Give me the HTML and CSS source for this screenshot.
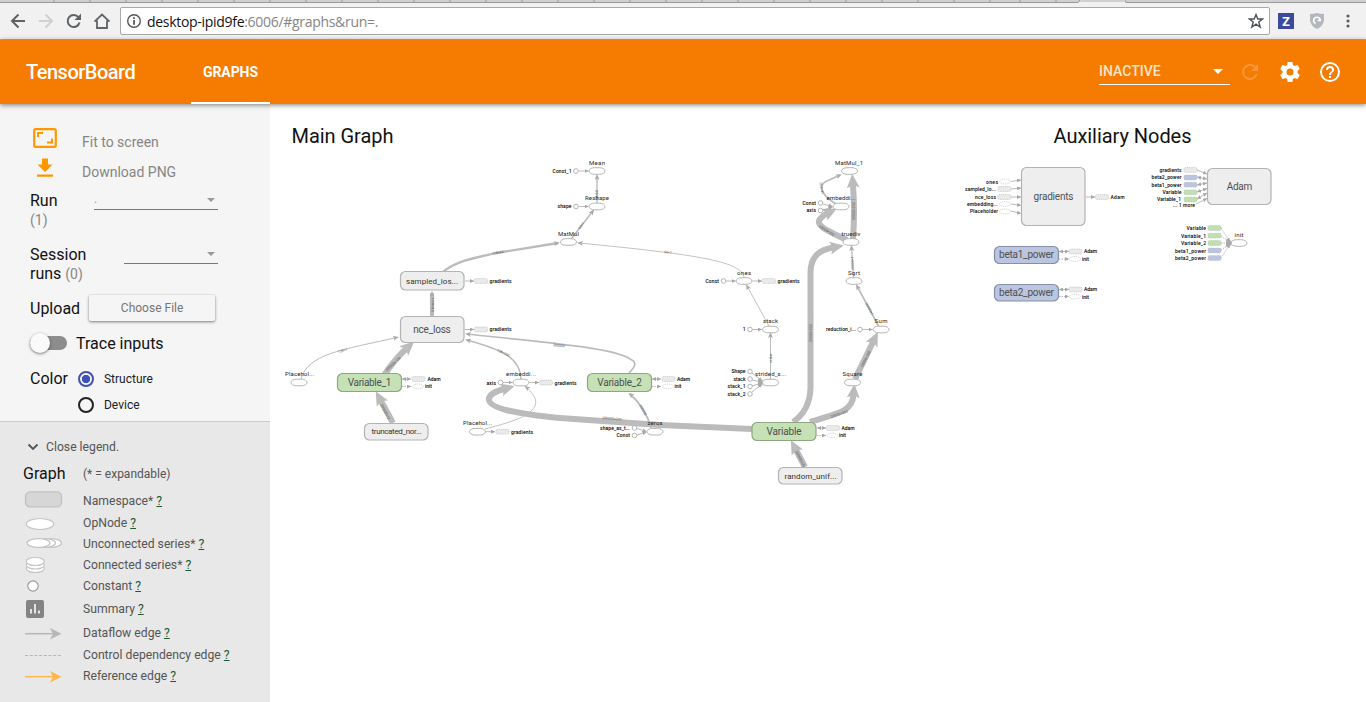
FILE: index.html
```
<!DOCTYPE html>
<html lang="en">
<head>
<meta charset="utf-8">
<title>TensorBoard</title>
<link rel="stylesheet" href="styles.css">
</head>
<body>
<header class="browser">
  <svg class="tabs" viewBox="0 0 1366 9">
    <path class="tab-back" d="M0 0H1080V2H1126V0H1366V2.5H1125L1124 0H1081L1079 2.5H0Z"/>
    <path class="tab-line" d="M0 2.5H1078L1080 0M1125 0L1126 2.5H1366M54 2V0M90 2V0M126 2V0M162 2V0M198 2V0M234 2V0M270 2V0M306 2V0M342 2V0M378 2V0M414 2V0M450 2V0M486 2V0M522 2V0M558 2V0M594 2V0M630 2V0M666 2V0M702 2V0M738 2V0M774 2V0M810 2V0M846 2V0M882 2V0M918 2V0M954 2V0M990 2V0M1020 2V0M1056 2V0"/>
  </svg>
  <div class="navbar">
    <svg class="nav-icons" viewBox="0 0 120 30">
      <g fill="none" stroke="#5f6368" stroke-width="2">
        <path d="M25 12H12.5M18.5 5.5L12 12L18.5 18.500"/>
        <path stroke="#d0d0d0" d="M39 12H51.500M45.500 5.500L52 12L45.500 18.500"/>
        <path d="M78.500 8.500A6 6 0 1 0 79.500 13.500"/>
        <path stroke-width="1.800" d="M94.500 12.700L102 5.500L109.500 12.700M97 11.500V19H107V11.500"/>
      </g>
      <path fill="#5f6368" d="M81 4.500V11H74.500Z"/>
    </svg>
    <div class="address">
      <svg class="info" viewBox="0 0 16 16"><circle cx="8" cy="8" r="6.300" fill="none" stroke="#555" stroke-width="1.400"/><path d="M8 4.300V5.900M8 7V11.700" stroke="#444" stroke-width="1.600"/></svg>
      <span class="url"><b>desktop-ipid9fe</b>:6006/#graphs&amp;run=.</span>
      <svg class="star" viewBox="0 0 16 16"><path d="M8 1.600L9.800 6H14.500L10.800 9L12.200 14L8 11.200L3.800 14L5.200 9L1.500 6H6.200Z" fill="none" stroke="#505459" stroke-width="1.400"/></svg>
    </div>
    <span class="ext-z">Z</span>
    <svg class="shield" viewBox="0 0 14 16"><path d="M0 1Q4 1 7 0Q10 1 14 1V8Q13 13 7 16Q1 13 0 8Z" fill="#b4b8c0"/><path d="M5.500 10.500A3.300 3.300 0 1 1 10.300 7.500L7.500 7.500" fill="none" stroke="#fff" stroke-width="1.600"/></svg>
    <svg class="dots" viewBox="0 0 4 14"><g fill="#5a5e63"><circle cx="2" cy="2" r="1.600"/><circle cx="2" cy="7" r="1.600"/><circle cx="2" cy="12" r="1.600"/></g></svg>
  </div>
</header>

<nav class="toolbar">
  <div class="brand">TensorBoard</div>
  <div class="tab">GRAPHS</div>
  <div class="inactive"><span>INACTIVE</span><i class="caret"></i></div>
  <svg class="tool refresh" viewBox="0 0 24 24"><path d="M17.650 6.350A8 8 0 1 0 19.730 14h-2.080A6 6 0 1 1 12 6c1.660 0 3.140.690 4.220 1.780L13 11h7V4z"/></svg>
  <svg class="tool" viewBox="0 0 24 24"><path d="M19.430 12.980c.040-.320.070-.640.070-.980s-.030-.660-.070-.980l2.110-1.650c.190-.150.240-.420.120-.640l-2-3.460c-.120-.220-.390-.300-.610-.220l-2.490 1c-.520-.400-1.080-.730-1.690-.980l-.380-2.650C14.460 2.180 14.250 2 14 2h-4c-.250 0-.460.180-.490.420l-.380 2.650c-.610.250-1.170.590-1.690.980l-2.490-1c-.230-.090-.490 0-.610.220l-2 3.460c-.130.220-.070.490.120.640l2.110 1.650c-.040.320-.070.650-.070.980s.030.660.070.980l-2.110 1.650c-.190.150-.240.420-.120.640l2 3.460c.120.220.390.300.610.220l2.490-1c.520.400 1.080.730 1.690.980l.380 2.650c.030.240.240.420.490.420h4c.250 0 .460-.180.490-.420l.380-2.650c.610-.250 1.170-.590 1.690-.980l2.490 1c.230.090.490 0 .610-.220l2-3.460c.120-.220.070-.490-.120-.640l-2.110-1.650zM12 15.500A3.500 3.500 0 1 1 12 8.500a3.500 3.500 0 0 1 0 7z"/></svg>
  <svg class="tool" viewBox="0 0 24 24"><path d="M11 18h2v-2h-2v2zm1-16a10 10 0 1 0 0 20 10 10 0 0 0 0-20zm0 18a8 8 0 1 1 0-16 8 8 0 0 1 0 16zm0-14a4 4 0 0 0-4 4h2c0-1.100.900-2 2-2s2 .900 2 2c0 2-3 1.750-3 5h2c0-2.250 3-2.500 3-5a4 4 0 0 0-4-4z"/></svg>
</nav>

<main class="content">
  <aside class="sidebar">
    <section class="controls">
      <div class="action fit"><svg viewBox="0 0 24 20"><rect x="1.200" y="1.200" width="21.600" height="17.600" rx="1.500" fill="none" stroke="#ff9800" stroke-width="2.200"/><path d="M5 9V5H10M14 14.500H19V10.500" fill="none" stroke="#ff9800" stroke-width="2"/></svg><span>Fit to screen</span></div>
      <div class="action dl"><svg viewBox="0 0 24 20"><path fill="#ff9800" d="M9 .5H15V6.500H19.500L12 14L4.500 6.500H9ZM4 16.500H20V18.700H4Z"/></svg><span>Download PNG</span></div>
      <div class="field run"><div class="name">Run<br><small>(1)</small></div><div class="select wide"><span>.</span><i class="caret"></i></div></div>
      <div class="field session"><div class="name">Session<br>runs <small>(0)</small></div><div class="select"><i class="caret"></i></div></div>
      <div class="upload"><span>Upload</span><div class="file">Choose File</div></div>
      <div class="trace"><div class="switch"><i></i></div><span>Trace inputs</span></div>
      <div class="color"><span>Color</span><div class="radios"><div class="radio on"><i></i>Structure</div><div class="radio"><i></i>Device</div></div></div>
    </section>
    <section class="legend">
      <div class="close"><svg viewBox="0 0 12 8"><path d="M1.500 1.500L6 6L10.500 1.500" fill="none" stroke="#555" stroke-width="1.900"/></svg>Close legend.</div>
      <div class="head"><b>Graph</b><span>(* = expandable)</span></div>
      <div class="item ns-item"><svg viewBox="0 0 40 18"><rect x="1.500" y=".8" width="36" height="15" rx="4.500" fill="#d6d6d6" stroke="#c2c2c2" stroke-width="1.300"/></svg><span>Namespace* <u>?</u></span></div>
      <div class="item"><svg viewBox="0 0 40 18"><ellipse class="le" cx="16" cy="10" rx="13.700" ry="5.500"/></svg><span>OpNode <u>?</u></span></div>
      <div class="item"><svg viewBox="0 0 40 18"><ellipse class="le" cx="26.500" cy="8" rx="11" ry="4.400"/><ellipse class="le" cx="20.500" cy="8" rx="11" ry="4.400"/><ellipse class="le" cx="14.500" cy="8" rx="11.500" ry="4.400"/></svg><span>Unconnected series* <u>?</u></span></div>
      <div class="item"><svg viewBox="0 0 40 18"><ellipse class="le" cx="11.300" cy="12.500" rx="9" ry="4"/><ellipse class="le" cx="11.300" cy="9" rx="9" ry="4"/><ellipse class="le" cx="11.300" cy="5.500" rx="9" ry="4"/></svg><span>Connected series* <u>?</u></span></div>
      <div class="item"><svg viewBox="0 0 40 18"><circle cx="9" cy="9" r="5.200" fill="#fff" stroke="#999" stroke-width="1.200"/></svg><span>Constant <u>?</u></span></div>
      <div class="item summary"><svg viewBox="0 0 40 18"><rect x="2" y="0" width="18" height="18" rx="2" fill="#848484"/><path d="M7 13.500V9M11 13.500V4M15 13.500V10.500" stroke="#eee" stroke-width="1.800"/></svg><span>Summary <u>?</u></span></div>
      <div class="item flow"><svg viewBox="0 0 40 18"><path d="M1 9.700H30" stroke="#b7b7b7" stroke-width="1.500"/><path d="M26 4L37.500 9.700L26 15.400L29 9.700Z" fill="#b7b7b7"/></svg><span>Dataflow edge <u>?</u></span></div>
      <div class="item"><svg viewBox="0 0 40 18"><path d="M1 9.500H37" stroke="#b7b7b7" stroke-width="1.200" stroke-dasharray="3 1.700"/></svg><span>Control dependency edge <u>?</u></span></div>
      <div class="item"><svg viewBox="0 0 40 18"><path d="M1 9.700H30" stroke="#ffb74d" stroke-width="1.500"/><path d="M26 4L37.500 9.700L26 15.400L29 9.700Z" fill="#ffb74d"/></svg><span>Reference edge <u>?</u></span></div>
    </section>
  </aside>

  <svg class="graph" viewBox="270 104 1096 598">
    <defs>
      <marker id="big" markerUnits="userSpaceOnUse" markerWidth="14" markerHeight="13" viewBox="0 0 14 13" refX="3" refY="6.500" orient="auto"><path d="M0 0L14 6.500L0 13L3 6.500Z" fill="#bbb"/></marker>
      <marker id="mid" markerUnits="userSpaceOnUse" markerWidth="6" markerHeight="5" viewBox="0 0 6 5" refX="4" refY="2.500" orient="auto"><path d="M0 0L6 2.500L0 5L1.500 2.500Z" fill="#aaa"/></marker>
      <marker id="tiny" markerUnits="userSpaceOnUse" markerWidth="4" markerHeight="4" viewBox="0 0 4 4" refX="4" refY="2" orient="auto-start-reverse"><path d="M0 0L4 2L0 4Z" fill="#a6a6a6"/></marker>
      <rect id="op" x="-8" y="-3.300" width="16" height="6.600" rx="5.500" ry="3.300"/>
      <circle id="c" r="2.300"/>
      <rect id="box" x="0" y="-2.400" width="13" height="4.800" rx="1.300"/>
      <ellipse id="oval" cx="6" cy="0" rx="5.500" ry="2.400"/>
    </defs>

    <text class="title" x="291.500" y="143" textLength="102">Main Graph</text>
    <text class="title" x="1053.500" y="143" textLength="138">Auxiliary Nodes</text>

    <g class="edge thick">
      <path d="M376 391C380 379 394 360 406 349"/>
      <path d="M393 423L381 401"/>
      <path d="M805 467L796 450"/>
      <path d="M752 429L660 425L560 418C515 414 490 408 489 400C488 394 497 391 504 389"/>
      <path d="M793 422C805 414 810 402 810.500 388V272C811 254 822 249.500 833 247.500"/>
      <path d="M810 422C838 413 852 412 853.500 395"/>
      <path d="M855 379L873 342"/>
      <path d="M853 239Q855 212 853 185"/>
      <path d="M847 240C828 231 813 225 821 218Q823 215.500 827 213.500"/>
    </g>
    <g class="edge medium">
      <path d="M443 272C456 261 474 258 496 253L558 243" stroke-width="2.300"/>
      <path d="M432 316V293" stroke-width="4"/>
      <path d="M571 239L593 211" stroke-width="1.500"/>
      <path d="M597 203V176" stroke-width="1.400"/>
      <path d="M629 373C636 366 637 362 630 359C613 347 530 341 467 334" stroke-width="1.700"/>
      <path d="M521 380C521 358 503 350 467 340" stroke-width="1.300"/>
      <path d="M301 379C308 354 341 350 397 337.500" stroke-width="1"/>
      <path d="M485 429C503 424 545 415 534 396Q530 390 526 387" stroke-width=".9"/>
      <path d="M744 278C743 262 703 255 579 243" stroke-width=".9"/>
      <path d="M769 326L747 286" stroke-width=".9"/>
      <path d="M770.500 379V334" stroke-width="1"/>
      <path d="M651 428C647 413 639 402 630 394" stroke-width="1.700"/>
      <path d="M879 327L857 286" stroke-width="1.600"/>
      <path d="M853.500 278L851.500 247" stroke-width="1.300"/>
      <path d="M836 204C817 192 820 184 827 181L840 175" stroke-width="1.800"/>
    </g>

    <g class="tensor">
      <text transform="translate(386 371) rotate(-43)">200000×128</text>
      <text transform="translate(381 404) rotate(63)">200000×12</text>
      <text transform="translate(796 451) rotate(63)">200000×20</text>
      <text transform="translate(602 418) rotate(5)">200000×200</text>
      <text transform="translate(811 342) rotate(-90)">20000×200</text>
      <text transform="translate(831 417) rotate(-18)">20000×200</text>
      <text transform="translate(862 367) rotate(-63)">20000×200</text>
      <text transform="translate(854.500 220) rotate(-90)">20000×200</text>
      <text transform="translate(819 226) rotate(32)">20000×200</text>
      <text transform="translate(492 254) rotate(-10)">128×64</text>
      <text transform="translate(433 312) rotate(-90)">6 tensors</text>
      <text transform="translate(579 229) rotate(-52)">64×1</text>
      <text transform="translate(597.500 200) rotate(-90)">64×64</text>
      <text transform="translate(553 345) rotate(7)">200000</text>
      <text transform="translate(497 350) rotate(27)">128×200</text>
      <text transform="translate(338 352) rotate(-14)">128×1</text>
      <text transform="translate(664 252) rotate(7)">64×1</text>
      <text transform="translate(640 405) rotate(62)">200000</text>
      <text transform="translate(771 363) rotate(-90)">scalar</text>
      <text transform="translate(853 270) rotate(-92)">20000×1</text>
      <text transform="translate(866 303) rotate(62)">20000×1</text>
      <text transform="translate(823 194) rotate(-100)">16×200</text>
    </g>

    <g class="ns">
      <rect x="400.500" y="271.500" width="63.500" height="18.500" rx="5"/>
      <rect x="400.500" y="316.500" width="63.500" height="26" rx="5"/>
      <rect x="364.500" y="423.500" width="63.500" height="16.500" rx="5"/>
      <rect x="778.500" y="467.500" width="63.500" height="16.500" rx="5"/>
      <rect x="1021.500" y="167.500" width="63.500" height="58" rx="5"/>
      <rect x="1207.500" y="168.500" width="63.500" height="36" rx="5"/>
    </g>
    <g class="ns green">
      <rect x="337.500" y="373.500" width="64" height="18" rx="5"/>
      <rect x="587.500" y="373.500" width="64" height="18" rx="5"/>
      <rect x="752" y="422.500" width="64" height="18" rx="5"/>
    </g>
    <g class="ns blue">
      <rect x="994.500" y="246.500" width="64" height="17" rx="5"/>
      <rect x="994.500" y="284.500" width="64" height="16.500" rx="5"/>
    </g>
    <g class="name-sm">
      <text x="432" y="284" textLength="52">sampled_los...</text>
      <text x="396.500" y="434.300" textLength="50">truncated_nor...</text>
      <text x="810.500" y="479" textLength="52">random_unif...</text>
    </g>
    <g class="name-lg">
      <text x="432" y="333" textLength="37.500">nce_loss</text>
      <text x="369.500" y="386.300" textLength="43.500">Variable_1</text>
      <text x="619.500" y="386.300" textLength="44.500">Variable_2</text>
      <text x="784" y="435.300" textLength="35">Variable</text>
      <text x="1053.500" y="200" textLength="40">gradients</text>
      <text x="1239.500" y="190.300" textLength="25.500">Adam</text>
      <text x="1026.500" y="258.300" textLength="55">beta1_power</text>
      <text x="1026.500" y="296.300" textLength="55">beta2_power</text>
    </g>

    <g class="op">
      <use href="#op" x="597" y="171"/><use href="#op" x="597" y="206.500"/><use href="#op" x="568.500" y="242"/>
      <use href="#op" x="744" y="281"/><use href="#op" x="770.500" y="329.500"/><use href="#op" x="770.500" y="382.500"/>
      <use href="#op" x="521" y="382.500"/><use href="#op" x="477.500" y="431.700"/><use href="#op" x="299" y="382.500"/>
      <use href="#op" x="655" y="431.700"/><use href="#op" x="849.500" y="171"/><use href="#op" x="841" y="206.500"/>
      <use href="#op" x="851" y="242"/><use href="#op" x="854" y="281"/><use href="#op" x="881" y="329.500"/>
      <use href="#op" x="852.500" y="382.500"/><use href="#op" x="1239" y="243"/>
      <use href="#c" x="576" y="171"/><use href="#c" x="576" y="206.500"/><use href="#c" x="723.500" y="281"/>
      <use href="#c" x="750" y="329.500"/><use href="#c" x="750" y="371.500"/><use href="#c" x="750" y="379"/>
      <use href="#c" x="750" y="386.500"/><use href="#c" x="750" y="394"/><use href="#c" x="500.500" y="382.500"/>
      <use href="#c" x="634.500" y="428"/><use href="#c" x="634.500" y="435.500"/><use href="#c" x="820.500" y="203"/>
      <use href="#c" x="820.500" y="210.500"/><use href="#c" x="860" y="329.500"/>
    </g>
    <g class="op-label">
      <text x="597" y="165" textLength="16">Mean</text><text x="597" y="200" textLength="24">Reshape</text>
      <text x="568.500" y="236" textLength="21">MatMul</text><text x="744" y="275" textLength="14">ones</text>
      <text x="770.500" y="323" textLength="15">stack</text><text x="770.500" y="376" textLength="31">strided_s...</text>
      <text x="521" y="376" textLength="30">embeddi...</text><text x="477.500" y="425" textLength="29">Placehol...</text>
      <text x="299.500" y="376" textLength="29">Placehol...</text><text x="655" y="425" textLength="15">zeros</text>
      <text x="849" y="165" textLength="28">MatMul_1</text><text x="841" y="200" textLength="29">embeddi...</text>
      <text x="851" y="236" textLength="19">truediv</text><text x="854" y="275" textLength="12">Sqrt</text>
      <text x="881" y="323" textLength="13">Sum</text><text x="852.500" y="376" textLength="20">Square</text>
      <text x="1239" y="237" textLength="9">init</text>
    </g>

    <g class="link">
      <path d="M579 171H588.500"/><path d="M579 206.500H588.500"/><path d="M726 281H735.500"/><path d="M752.500 329.500H762"/>
      <path d="M752 373L762 381"/><path d="M752 380L762 382"/><path d="M752 386L762 383"/><path d="M752 392L762 384"/>
      <path d="M503 382.500H512.500"/><path d="M637 428.500L646.500 431.500"/><path d="M637 435L646.500 432"/>
      <path d="M823 204L832.500 206.500"/><path d="M823 210L832.500 207"/><path d="M862.500 329.500H872.500"/>
      <path d="M465 281H474"/><path d="M465 329.500H474"/><path d="M529 382.500H539"/><path d="M485.500 431.700H495"/><path d="M752.500 281H762"/>
      <path d="M1086 197H1095"/>
      <path d="M1011 181.500L1021 180"/><path d="M1011 189L1021 188"/><path d="M1011 197H1021"/><path d="M1011 204L1021 205.500"/><path d="M1011 211L1021 213.500"/>
      <path d="M1197 170L1207 174"/><path class="two" d="M1197 177L1207 179"/><path class="two" d="M1197 185L1207 183"/><path class="two" d="M1197 192L1207 188.500"/><path class="two" d="M1197 199L1207 193"/><path d="M1196 204L1207 198.500"/>
      <path class="two" d="M402 379H411"/><path class="two" d="M652 379H661"/><path class="two" d="M817 428H826"/><path class="two" d="M1059 251.500H1069"/><path class="two" d="M1059 289.500H1069"/>
    </g>
    <g class="link dashed">
      <path d="M402 386.500H411"/><path d="M652 386.500H661"/><path d="M817 435.500H826"/><path d="M1059 259H1069"/><path d="M1059 296.500H1069"/>
      <path d="M1221 228L1230 242"/><path d="M1221 236L1230 242"/><path d="M1221 243H1230"/><path d="M1221 250L1230 244"/><path d="M1221 258L1230 244"/>
    </g>
    <ellipse cx="1229.500" cy="243" rx="2" ry="3" fill="#aaa"/><rect x="759.500" y="379.500" width="3" height="6" fill="#aaa"/>

    <g class="ann">
      <use href="#box" x="474.500" y="281"/><use href="#box" x="474.500" y="329.500"/><use href="#box" x="539.500" y="382.500"/>
      <use href="#box" x="496" y="431.700"/><use href="#box" x="762.500" y="281"/><use href="#box" x="412" y="379"/>
      <use href="#box" x="662" y="379"/><use href="#box" x="826.500" y="428"/><use href="#box" x="1095.500" y="197"/>
      <use href="#box" x="1069" y="251.500"/><use href="#box" x="1069" y="289.500"/><use href="#box" x="998" y="189"/>
      <use href="#box" x="998" y="197"/><use href="#box" x="1184" y="170"/>
      <g class="ann-op"><use href="#oval" x="412" y="386.500"/><use href="#oval" x="662" y="386.500"/><use href="#oval" x="826.500" y="435.500"/>
      <use href="#oval" x="1069" y="259"/><use href="#oval" x="1069" y="296.500"/><use href="#oval" x="999" y="181.500"/>
      <use href="#oval" x="999" y="204"/><use href="#oval" x="999" y="211.500"/></g>
      <g class="ann-blue"><use href="#box" x="1184" y="177.500"/><use href="#box" x="1184" y="184.700"/><use href="#box" x="1208" y="250.500"/><use href="#box" x="1208" y="258"/></g>
      <g class="ann-green"><use href="#box" x="1184" y="192.300"/><use href="#box" x="1184" y="199.500"/><use href="#box" x="1208" y="228"/><use href="#box" x="1208" y="235.700"/><use href="#box" x="1208" y="243"/></g>
    </g>
    <g class="ann-text">
      <text x="489.500" y="283" textLength="22">gradients</text><text x="489.500" y="331.300" textLength="22">gradients</text>
      <text x="554.500" y="384.700" textLength="22">gradients</text><text x="511" y="433.700" textLength="22">gradients</text>
      <text x="777.500" y="283" textLength="22">gradients</text>
      <text x="427.500" y="381" textLength="13">Adam</text><text x="425" y="388.200" textLength="7">init</text>
      <text x="677" y="381" textLength="13">Adam</text><text x="674.500" y="388.200" textLength="7">init</text>
      <text x="841.500" y="430" textLength="13">Adam</text><text x="839" y="437.200" textLength="7">init</text>
      <text x="1110.500" y="199" textLength="14">Adam</text>
      <text x="1084" y="253.300" textLength="13">Adam</text><text x="1082" y="261" textLength="7">init</text>
      <text x="1084" y="291" textLength="13">Adam</text><text x="1082" y="298.500" textLength="7">init</text>
    </g>
    <g class="ann-text end">
      <text x="571.500" y="173" textLength="19">Const_1</text><text x="571.500" y="208.300" textLength="14">shape</text>
      <text x="719" y="283" textLength="13.500">Const</text><text x="745.500" y="331.300">1</text>
      <text x="745.500" y="373" textLength="14">Shape</text><text x="745.500" y="381" textLength="12">stack</text>
      <text x="745.500" y="388.300" textLength="18">stack_1</text><text x="745.500" y="396" textLength="18">stack_2</text>
      <text x="496" y="385" textLength="9.500">axis</text><text x="630" y="430" textLength="30">shape_as_t...</text>
      <text x="630" y="437.200" textLength="13.500">Const</text><text x="816" y="205" textLength="13.500">Const</text>
      <text x="816" y="212" textLength="9.500">axis</text><text x="856" y="331.300" textLength="30">reduction_i...</text>
      <text x="998" y="183.700" textLength="12">ones</text><text x="996" y="191" textLength="31">sampled_lo...</text>
      <text x="996" y="198.700" textLength="21">nce_loss</text><text x="998" y="206" textLength="31">embedding...</text>
      <text x="998" y="213" textLength="28">Placeholder</text>
      <text x="1181.500" y="172" textLength="22">gradients</text><text x="1181.500" y="179.300" textLength="30">beta2_power</text>
      <text x="1181.500" y="186.700" textLength="30">beta1_power</text><text x="1181.500" y="194" textLength="19">Variable</text>
      <text x="1181" y="201.300" textLength="24">Variable_1</text><text x="1195" y="207" textLength="22">... 1 more</text>
      <text x="1206" y="230" textLength="19.500">Variable</text><text x="1206" y="237.700" textLength="25">Variable_1</text>
      <text x="1206" y="245" textLength="25">Variable_2</text><text x="1206" y="252.500" textLength="31">beta1_power</text>
      <text x="1206" y="260" textLength="31">beta2_power</text>
    </g>
  </svg>
</main>
</body>
</html>
```
FILE: styles.css
```
* { box-sizing: border-box; }
body { margin: 0; width: 1366px; height: 702px; overflow: hidden; background: #fff; font-family: Roboto, sans-serif; color: #111; }
svg { display: block; flex: none; }
i { font-style: normal; }

.browser { height: 40px; background: #f1f1f1; border-bottom: 1px solid #b4b0aa; }
.tabs { width: 1366px; height: 9px; }
.tab-back { fill: #d0d0d0; }
.tab-line { fill: none; stroke: #999; stroke-width: 1; }
.navbar { display: flex; height: 30px; }
.nav-icons { width: 120px; height: 30px; }
.address { display: flex; width: 1150px; height: 28px; margin-top: -2px; padding: 0 5px; align-items: center; background: #fff; border: 1px solid #a9a9a9; border-radius: 2px; }
.info { width: 16px; height: 16px; }
.url { flex: 1; margin-left: 5px; font: 14px "Open Sans", sans-serif; letter-spacing: -.3px; color: #858585; white-space: nowrap; }
.url b { font-weight: 400; color: #111; }
.star { width: 16px; height: 16px; }
.ext-z { width: 16px; height: 16px; margin: 4px 0 0 8px; background: #3c4a9d; color: #fff; font: bold 13px/16px "Open Sans", sans-serif; text-align: center; }
.shield { width: 14px; height: 16px; margin: 4px 0 0 16px; }
.dots { width: 4px; height: 14px; margin: 5px 0 0 22px; }

.toolbar { position: relative; z-index: 1; display: flex; align-items: center; height: 64px; padding-left: 26px; background: #f57c00; color: #fff; box-shadow: 0 1px 5px rgba(0,0,0,.5); }
.brand { width: 165px; font-size: 20px; font-weight: 500; letter-spacing: -.5px; }
.tab { width: 79px; height: 64px; border-bottom: 2px solid #fff; font-size: 14px; font-weight: 700; letter-spacing: -.1px; line-height: 65px; text-align: center; }
.inactive { display: flex; justify-content: space-between; align-items: center; width: 131px; height: 28px; margin-left: 829px; margin-top: -2px; padding-right: 7px; border-bottom: 1px solid #fff; font-size: 14px; font-weight: 500; color: #ffe3c7; }
.caret { border: 5px solid transparent; border-top-color: currentColor; border-bottom: 0; }
.inactive .caret { color: #fff; margin-top: 2px; }
.tool { width: 24px; height: 24px; margin-left: 16px; fill: #fff; }
.refresh { width: 24px; margin-left: 8px; fill: #f9963a; }

.content { display: flex; height: 598px; }
.sidebar { width: 270px; background: #f5f5f5; }
.controls { height: 317px; padding: 24px 0 0 30px; font-size: 16px; }
.action { display: flex; height: 30px; font-size: 14px; color: #858585; }
.action svg { width: 24px; height: 20px; margin: 0 25px 0 3px; }
.action span { padding-top: 6px; }
.field { display: flex; height: 54px; }
.field small { font-size: 14px; color: #888; }
.name { width: 64px; line-height: 19px; padding-top: 3px; white-space: nowrap; }
.select { width: 94px; height: 22px; margin-left: 30px; padding-right: 3px; border-bottom: 1px solid #777; display: flex; align-items: center; justify-content: flex-end; color: #999; font-size: 12px; }
.select.wide { width: 124px; margin-left: 0; justify-content: space-between; }
.select .caret { border-width: 4px 4px 0; margin-top: 3px; }
.upload { display: flex; align-items: center; height: 26px; margin-top: -1px; }
.file { width: 126px; height: 26px; margin-left: 9px; border-radius: 2px; background: #f5f5f5; box-shadow: 0 1px 3px rgba(0,0,0,.5); font-size: 12px; line-height: 26px; text-align: center; color: #777; }
.trace { display: flex; align-items: center; height: 20px; margin-top: 12px; }
.switch { width: 37px; height: 14px; border-radius: 7px; background: #8d8d8d; margin-right: 9px; display: flex; align-items: center; }
.switch i { width: 20px; height: 20px; border-radius: 50%; background: #fafafa; box-shadow: 0 1px 3px rgba(0,0,0,.5); }
.color { display: flex; margin-top: 13px; line-height: 26px; }
.radios { margin-left: 10px; }
.radio { display: flex; align-items: center; height: 26px; font-size: 12px; color: #222; }
.radio i { width: 16px; height: 16px; border: 2px solid #222; border-radius: 50%; margin-right: 10px; }
.radio.on i { border-color: #3f51b5; background: radial-gradient(#3f51b5 3.800px, transparent 4.500px); }

.legend { height: 281px; padding-top: 16px; border-top: 1px solid #ccc; background: #e8e8e8; font-size: 12.2px; color: #555; }
.close { display: flex; align-items: center; height: 18px; padding-left: 27px; }
.close svg { width: 12px; height: 8px; margin-right: 7px; }
.head { display: flex; align-items: center; height: 35px; padding-left: 23px; font-size: 12px; }
.head b { width: 60px; font-size: 16px; font-weight: 400; color: #111; }
.item { display: flex; align-items: center; height: 21px; padding-left: 24px; white-space: nowrap; }
.item svg { width: 40px; height: 18px; margin-right: 19px; }
.item u { color: #1c5931; }
.ns-item { align-items: flex-start; }
.ns-item span { padding-top: 3px; }
.summary { height: 26px; }
.flow { height: 22px; }
.le { fill: #fff; stroke: #c5c5c5; stroke-width: 1.200; }

.graph { width: 1096px; height: 598px; font-family: Roboto, sans-serif; }
.title { font-size: 20px; fill: #111; }
.edge { fill: none; stroke: #bbb; }
.thick path { stroke-width: 6; marker-end: url(#big); }
.medium path { marker-end: url(#mid); }
marker path { stroke: none; }
.tensor text { font-size: 3.500px; fill: #555; dominant-baseline: middle; }
.ns rect { fill: #eee; stroke: #b3b3b3; stroke-width: 1.200; }
.green rect { fill: #c5e1b5; stroke: #8fa680; }
.blue rect { fill: #bac5df; stroke: #8590a8; }
.name-sm text { font-size: 8px; fill: #333; text-anchor: middle; }
.name-lg text { font-size: 10px; fill: #505050; text-anchor: middle; }
.op { fill: #fff; stroke: #b5b5b5; stroke-width: 1; }
.op-label text { font-size: 6px; fill: #222; text-anchor: middle; }
.link path { fill: none; stroke: #aaa; stroke-width: .8; marker-end: url(#tiny); }
.link .two { marker-start: url(#tiny); }
.dashed path { stroke-dasharray: 1.500 1; }
.ann { fill: #eaeaea; stroke: #bbb; stroke-width: .7; stroke-dasharray: 1 .8; }
.ann-op { fill: #fff; }
.ann-blue { fill: #bac5df; }
.ann-green { fill: #c0e0ae; }
.ann-text text { font-size: 5px; font-weight: 500; fill: #000; }
.end text { text-anchor: end; }
```
